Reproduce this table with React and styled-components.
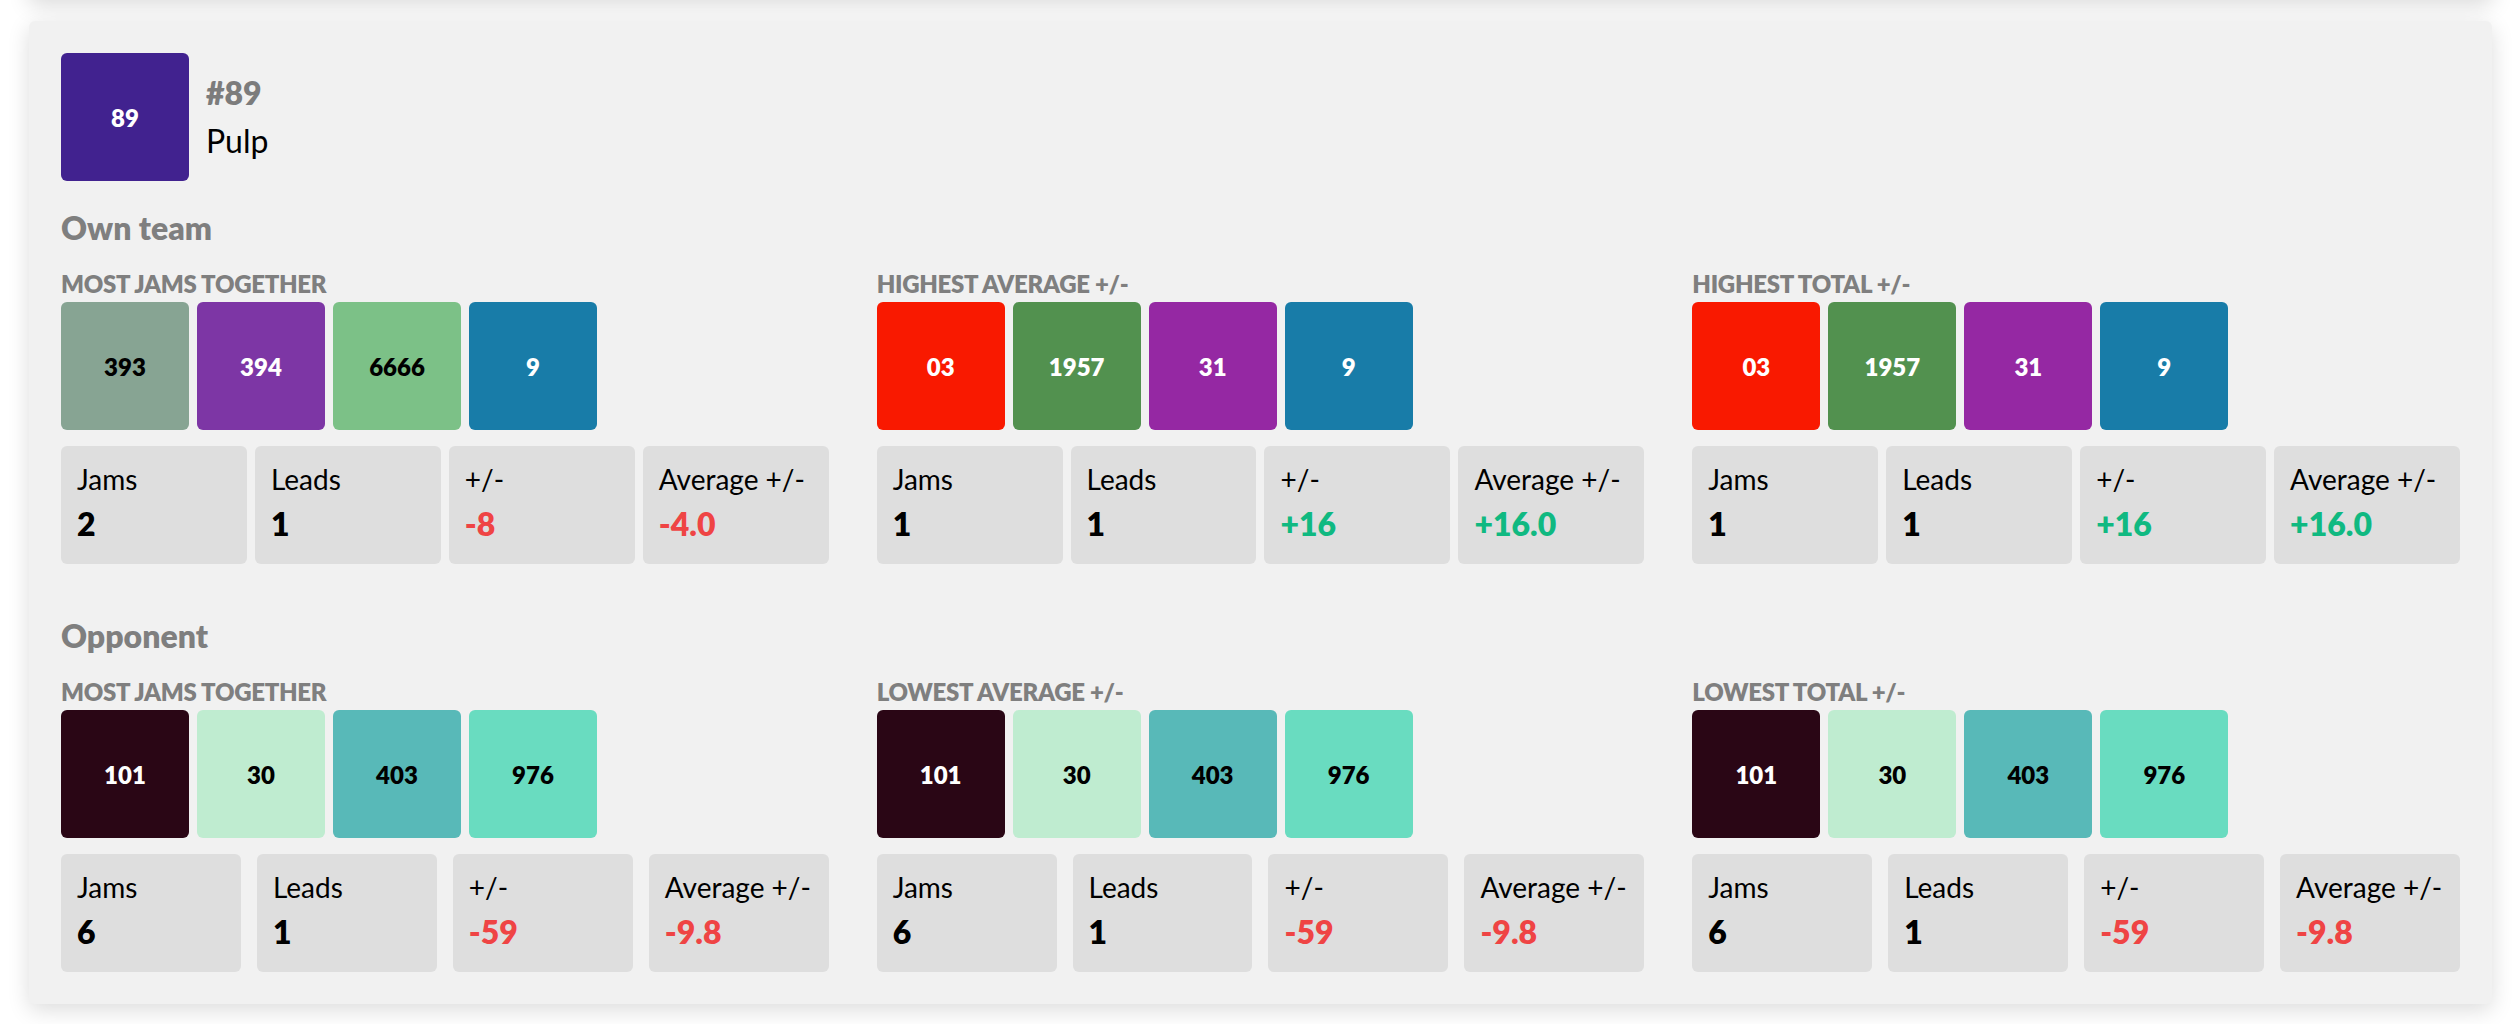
import React from "react"
import styled, { createGlobalStyle } from "styled-components"

const GlobalStyle = createGlobalStyle`
    html, body {
        margin: 0;
        padding: 0;
        background: #ffffff;
    }
    body {
        font-family: "Lato", "Open Sans", sans-serif;
        color: #000000;
    }
`

const OWN_SKATERS = [
    { number: "393", color: "#87a493", dark: true },
    { number: "394", color: "#7d36a5" },
    { number: "6666", color: "#7cc187", dark: true },
    { number: "9", color: "#187ca8" },
]
const OWN_BEST = [
    { number: "03", color: "#f91900" },
    { number: "1957", color: "#52914f" },
    { number: "31", color: "#9528a3" },
    { number: "9", color: "#187ca8" },
]
const OPPONENTS = [
    { number: "101", color: "#2a0615" },
    { number: "30", color: "#bfecd0", dark: true },
    { number: "403", color: "#58b9b8", dark: true },
    { number: "976", color: "#69dcc0", dark: true },
]

const OWN_STATS = [
    { label: "Jams", value: "2" },
    { label: "Leads", value: "1" },
    { label: "+/-", value: "-8", tone: "neg" },
    { label: "Average +/-", value: "-4.0", tone: "neg" },
]
const BEST_STATS = [
    { label: "Jams", value: "1" },
    { label: "Leads", value: "1" },
    { label: "+/-", value: "+16", tone: "pos" },
    { label: "Average +/-", value: "+16.0", tone: "pos" },
]
const OPP_STATS = [
    { label: "Jams", value: "6" },
    { label: "Leads", value: "1" },
    { label: "+/-", value: "-59", tone: "neg" },
    { label: "Average +/-", value: "-9.8", tone: "neg" },
]

const SECTIONS = [
    {
        title: "Own team",
        gap: 8,
        groups: [
            { title: "Most jams together", skaters: OWN_SKATERS, stats: OWN_STATS },
            { title: "Highest average +/-", skaters: OWN_BEST, stats: BEST_STATS },
            { title: "Highest total +/-", skaters: OWN_BEST, stats: BEST_STATS },
        ],
    },
    {
        title: "Opponent",
        gap: 16,
        groups: [
            { title: "Most jams together", skaters: OPPONENTS, stats: OPP_STATS },
            { title: "Lowest average +/-", skaters: OPPONENTS, stats: OPP_STATS },
            { title: "Lowest total +/-", skaters: OPPONENTS, stats: OPP_STATS },
        ],
    },
]

export default function App() {
    return (
        <Page>
            <GlobalStyle />
            <PreviousCard />
            <Card>
                <Header>
                    <Avatar $color="#41228f">89</Avatar>
                    <Identity>
                        <Number>#89</Number>
                        <Name>Pulp</Name>
                    </Identity>
                </Header>
                { SECTIONS.map(section => (
                    <Section key={ section.title }>
                        <SectionTitle>{ section.title }</SectionTitle>
                        <Groups>
                            { section.groups.map(group => (
                                <Group key={ group.title } { ...group } gap={ section.gap } />
                            )) }
                        </Groups>
                    </Section>
                )) }
            </Card>
        </Page>
    )
}

const Group = ({ title, skaters, stats, gap }) => (
    <div>
        <GroupTitle>{ title }</GroupTitle>
        <Skaters>
            { skaters.map((skater, i) => (
                <Skater key={ i } $color={ skater.color } $dark={ skater.dark }>
                    { skater.number }
                </Skater>
            )) }
        </Skaters>
        <Stats $gap={ gap }>
            { stats.map(stat => (
                <Stat key={ stat.label }>
                    <StatLabel>{ stat.label }</StatLabel>
                    <StatValue $tone={ stat.tone }>{ stat.value }</StatValue>
                </Stat>
            )) }
        </Stats>
    </div>
)

const Page = styled.div`
    padding: 0 24px 0 29px;
    overflow: hidden;
`
// bottom of the card above, scrolled just out of view
const PreviousCard = styled.div`
    height: 40px;
    margin: -40px 0 21px;
    border-radius: 6px;
    background: #f1f1f1;
    box-shadow: 0 6px 22px rgba(0, 0, 0, 0.14);
`
const Card = styled.div`
    background: #f1f1f1;
    border-radius: 6px;
    padding: 32px;
    margin-bottom: 20px;
    box-shadow: 0 6px 22px rgba(0, 0, 0, 0.14);
`
const Header = styled.div`
    display: flex;
    align-items: center;
    gap: 17px;
`
const Avatar = styled.div`
    width: 128px;
    height: 128px;
    border-radius: 6px;
    background: ${ ({ $color }) => $color };
    color: #ffffff;
    display: flex;
    align-items: center;
    justify-content: center;
    font-size: 24px;
    font-weight: 800;
`
const Identity = styled.div`
    display: flex;
    flex-direction: column;
    font-size: 32px;
    line-height: 48px;
`
const Number = styled.span`
    color: #7c7c7c;
    font-weight: 800;
`
const Name = styled.span`
    color: #000000;
`
const Section = styled.section`
    margin-top: 23px;

    & + & {
        margin-top: 48px;
    }
`
const SectionTitle = styled.h2`
    margin: 0 0 14px;
    font-size: 32px;
    line-height: 48px;
    font-weight: 800;
    color: #7f7f7f;
`
const Groups = styled.div`
    display: grid;
    grid-template-columns: repeat(3, minmax(0, 1fr));
    gap: 48px;
`
const GroupTitle = styled.h3`
    margin: 0;
    font-size: 24px;
    line-height: 36px;
    font-weight: 800;
    text-transform: uppercase;
    color: #7f7f7f;
    letter-spacing: -0.3px;
`
const Skaters = styled.div`
    display: flex;
    gap: 8px;
`
const Skater = styled.div`
    width: 128px;
    height: 128px;
    border-radius: 6px;
    background: ${ ({ $color }) => $color };
    color: ${ ({ $dark }) => $dark ? "#000000" : "#ffffff" };
    display: flex;
    align-items: center;
    justify-content: center;
    font-size: 24px;
    font-weight: 800;
`
const Stats = styled.div`
    display: grid;
    grid-template-columns: repeat(4, minmax(0, 1fr));
    gap: ${ ({ $gap }) => $gap }px;
    margin-top: 16px;
`
const Stat = styled.div`
    background: #dedede;
    border-radius: 6px;
    padding: 12px 16px 16px;
    display: flex;
    flex-direction: column;
    white-space: nowrap;
`
const StatLabel = styled.span`
    font-size: 28px;
    line-height: 42px;
    color: #000000;
`
const StatValue = styled.span`
    font-size: 32px;
    line-height: 48px;
    font-weight: 800;
    color: ${ ({ $tone }) => $tone === "neg" ? "#ef4444" : $tone === "pos" ? "#10b981" : "#000000" };
`
